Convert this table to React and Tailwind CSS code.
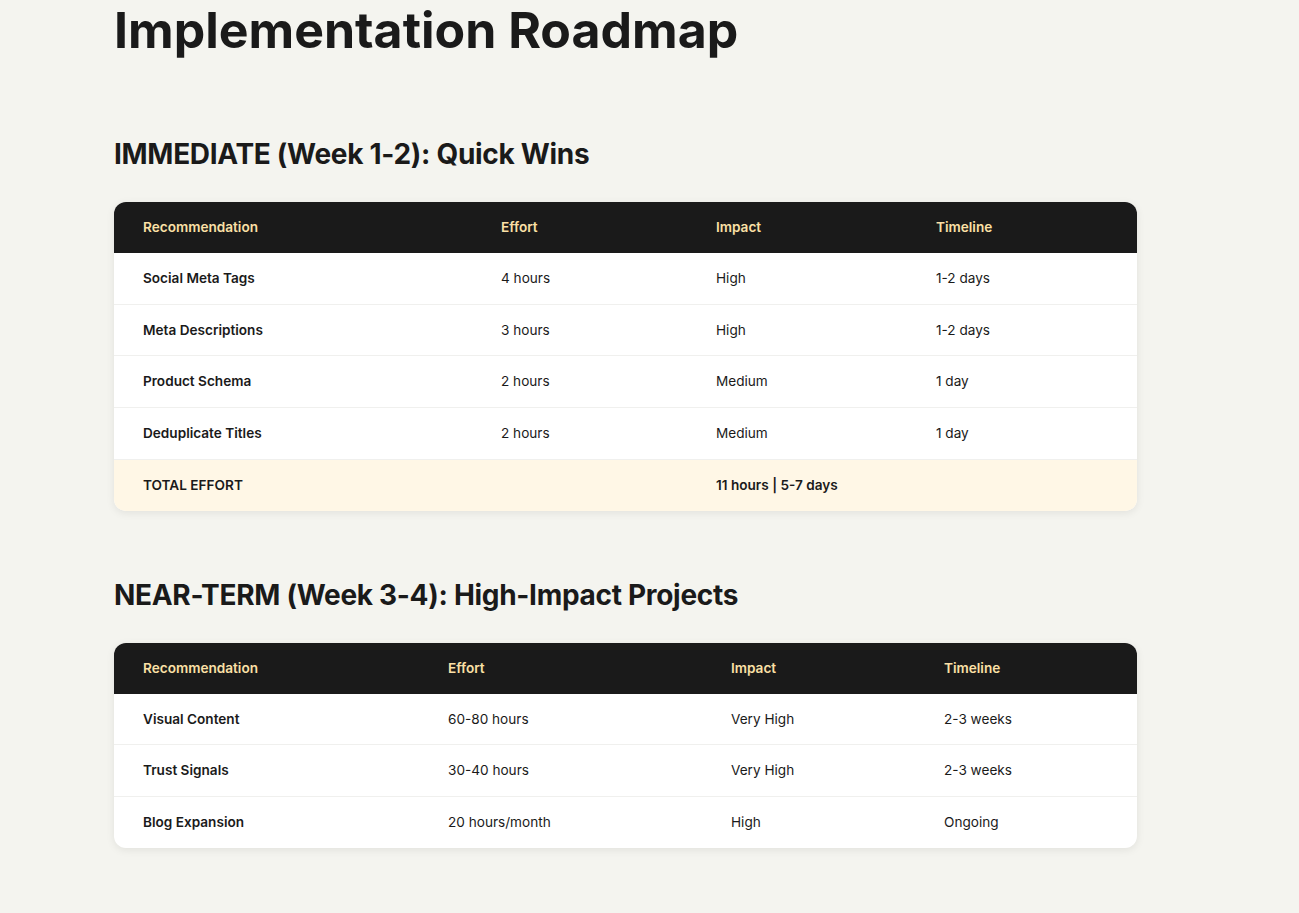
import React from 'react';

const quickWins = [
  { rec: 'Social Meta Tags', effort: '4 hours', impact: 'High', timeline: '1-2 days' },
  { rec: 'Meta Descriptions', effort: '3 hours', impact: 'High', timeline: '1-2 days' },
  { rec: 'Product Schema', effort: '2 hours', impact: 'Medium', timeline: '1 day' },
  { rec: 'Deduplicate Titles', effort: '2 hours', impact: 'Medium', timeline: '1 day' },
];

const nearTerm = [
  { rec: 'Visual Content', effort: '60-80 hours', impact: 'Very High', timeline: '2-3 weeks' },
  { rec: 'Trust Signals', effort: '30-40 hours', impact: 'Very High', timeline: '2-3 weeks' },
  { rec: 'Blog Expansion', effort: '20 hours/month', impact: 'High', timeline: 'Ongoing' },
];

const RoadmapTable = ({ rows, cols, total }) => (
  <div className="bg-white rounded-xl shadow-[0_2px_8px_rgba(0,0,0,0.08)] overflow-hidden">
    <table className="w-full table-fixed border-collapse text-left text-[13.6px] leading-[18.8px] text-[#1a1a1a]">
      <colgroup>
        {cols.map((w, i) => (
          <col key={i} style={{ width: w }} />
        ))}
      </colgroup>
      <thead>
        <tr className="bg-[#1a1a1a] text-[#fbe0a6]">
          <th className="pl-[29px] py-4 font-semibold">Recommendation</th>
          <th className="py-4 font-semibold">Effort</th>
          <th className="py-4 font-semibold">Impact</th>
          <th className="py-4 font-semibold">Timeline</th>
        </tr>
      </thead>
      <tbody>
        {rows.map((r, i) => (
          <tr key={r.rec} className={i > 0 ? 'border-t border-[#f0f0ee]' : ''}>
            <td className="pl-[29px] py-4 font-semibold">{r.rec}</td>
            <td className="py-4">{r.effort}</td>
            <td className="py-4">{r.impact}</td>
            <td className="py-4">{r.timeline}</td>
          </tr>
        ))}
        {total && (
          <tr className="border-t border-[#f0f0ee] bg-[#fff7e6] font-semibold">
            <td colSpan="2" className="pl-[29px] py-4">TOTAL EFFORT</td>
            <td colSpan="2" className="py-4">{total}</td>
          </tr>
        )}
      </tbody>
    </table>
  </div>
);

export default function App() {
  return (
    <div className="min-h-[913px] bg-[#f4f4ef] text-[#1a1a1a]" style={{ fontFamily: 'Inter, "Liberation Sans", sans-serif' }}>
      <div className="pl-[114px] w-[1137px] pb-16">
        <h1 className="text-[50px] font-bold leading-none tracking-normal pt-[5px]">
          Implementation Roadmap
        </h1>

        <h2 className="mt-[82px] text-[28px] font-bold leading-tight tracking-[-0.3px]">
          IMMEDIATE (Week 1-2): Quick Wins
        </h2>
        <div className="mt-[30px]">
          <RoadmapTable rows={quickWins} cols={[387, 215, 220, 201]} total="11 hours | 5-7 days" />
        </div>

        <h2 className="mt-[67px] text-[28px] font-bold leading-tight tracking-[-0.3px]">
          NEAR-TERM (Week 3-4): High-Impact Projects
        </h2>
        <div className="mt-[30px]">
          <RoadmapTable rows={nearTerm} cols={[334, 283, 213, 193]} />
        </div>
      </div>
    </div>
  );
}
